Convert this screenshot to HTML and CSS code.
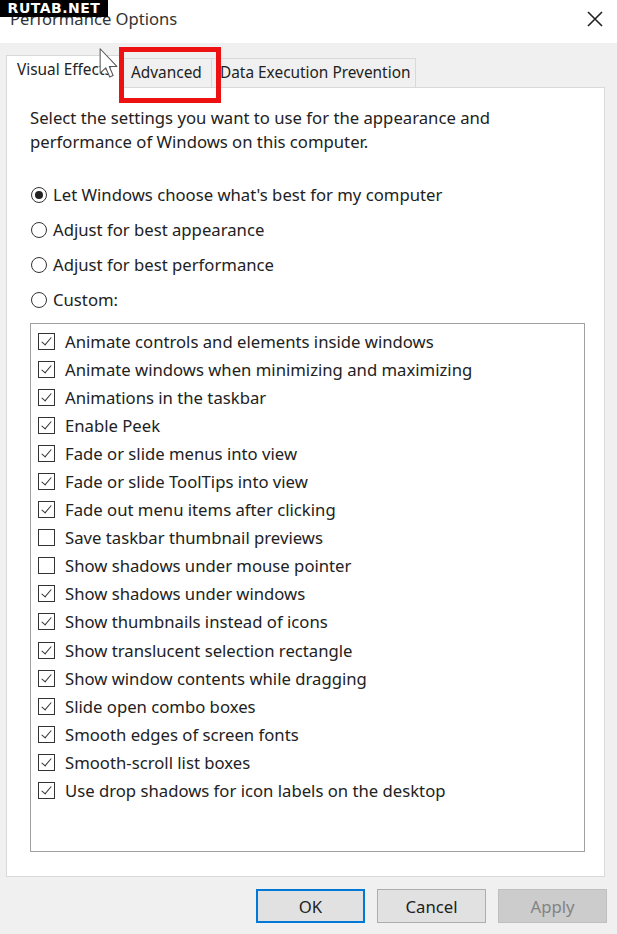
FILE: index.html
```html
<!DOCTYPE html>
<html lang="en">

<head>
    <meta charset="UTF-8">
    <meta name="viewport" content="width=device-width, initial-scale=1.0">
    <title>Performance Options</title>
    <link rel="stylesheet" href="styles.css">
</head>

<body>
    <div class="window">
        <div class="titlebar">
            <span class="title">Performance Options</span>
            <svg class="close" width="16" height="16" viewBox="0 0 16 16">
                <path d="M1 1 L15 15 M15 1 L1 15" stroke="#222" stroke-width="1.6" fill="none" />
            </svg>
        </div>

        <div class="tabs">
            <div class="tab selected">Visual Effects</div>
            <div class="tab">Advanced</div>
            <div class="tab">Data Execution Prevention</div>
        </div>

        <div class="panel">
            <p class="intro">Select the settings you want to use for the appearance and performance of Windows on this computer.</p>

            <div class="radios">
                <div class="radio-row"><span class="radio checked"></span>Let Windows choose what's best for my computer</div>
                <div class="radio-row"><span class="radio"></span>Adjust for best appearance</div>
                <div class="radio-row"><span class="radio"></span>Adjust for best performance</div>
                <div class="radio-row"><span class="radio"></span>Custom:</div>
            </div>

            <ul class="listbox">
                <li><span class="check on"></span>Animate controls and elements inside windows</li>
                <li><span class="check on"></span>Animate windows when minimizing and maximizing</li>
                <li><span class="check on"></span>Animations in the taskbar</li>
                <li><span class="check on"></span>Enable Peek</li>
                <li><span class="check on"></span>Fade or slide menus into view</li>
                <li><span class="check on"></span>Fade or slide ToolTips into view</li>
                <li><span class="check on"></span>Fade out menu items after clicking</li>
                <li><span class="check"></span>Save taskbar thumbnail previews</li>
                <li><span class="check"></span>Show shadows under mouse pointer</li>
                <li><span class="check on"></span>Show shadows under windows</li>
                <li><span class="check on"></span>Show thumbnails instead of icons</li>
                <li><span class="check on"></span>Show translucent selection rectangle</li>
                <li><span class="check on"></span>Show window contents while dragging</li>
                <li><span class="check on"></span>Slide open combo boxes</li>
                <li><span class="check on"></span>Smooth edges of screen fonts</li>
                <li><span class="check on"></span>Smooth-scroll list boxes</li>
                <li><span class="check on"></span>Use drop shadows for icon labels on the desktop</li>
            </ul>
        </div>

        <div class="buttons">
            <button class="default">OK</button>
            <button>Cancel</button>
            <button disabled>Apply</button>
        </div>
    </div>

    <!-- overlays from the video frame -->
    <div class="watermark">RUTAB.NET</div>
    <div class="highlight"></div>
    <svg class="cursor" width="20" height="31" viewBox="0 0 13 21">
        <path d="M0.5 0.5 L0.5 17 L4.3 13.4 L7 19.6 L9.3 18.6 L6.7 12.5 L11.8 12.5 Z" fill="#fff" stroke="#555" stroke-width="0.7" stroke-linejoin="round" />
    </svg>
</body>

</html>
```

FILE: styles.css
```css
body {
    margin: 0;
    padding: 0;
    background-color: #f0f0f0;
    font-family: "Noto Sans", "Open Sans", sans-serif;
    font-size: 16.7px;
    color: #222;
}

.window {
    display: flex;
    flex-direction: column;
    height: 934px;
}

.titlebar {
    height: 43px;
    background-color: #fff;
    display: flex;
    align-items: center;
    justify-content: space-between;
    padding: 0 14px 6px 10px;
    box-sizing: border-box;
}

.title {
    font-size: 16.6px;
    color: #333;
}

/* Tabs */
.tabs {
    display: flex;
    align-items: flex-end;
    margin: 12px 0 0 6px;
    position: relative;
    z-index: 1;
    font-size: 15.4px;
}

.tab {
    height: 29px;
    line-height: 27px;
    padding: 0 8px;
    box-sizing: border-box;
    border: 1px solid #d9d9d9;
    border-bottom: none;
    background-color: #f0f0f0;
    white-space: nowrap;
    overflow: hidden;
}

.tab.selected {
    height: 33px;
    width: 116px;
    padding-left: 10px;
    background-color: #fff;
    margin-bottom: -1px;
    border-right: none;
}

.tab:nth-child(2) {
    width: 90px;
}

.tab:nth-child(3) {
    width: 204px;
    border-left: none;
}

/* Panel */
.panel {
    margin: 0 12px 0 6px;
    background-color: #fff;
    border: 1px solid #d9d9d9;
    padding: 18px 19px 24px 23px;
}

.intro {
    margin: 0;
    line-height: 24px;
    width: 490px;
}

.radios {
    margin-top: 23px;
    margin-bottom: 6px;
}

.radio-row {
    display: flex;
    align-items: center;
    height: 35px;
}

.radio {
    width: 16px;
    height: 16px;
    border: 1px solid #333;
    border-radius: 50%;
    box-sizing: border-box;
    margin: 0 6px 0 1px;
    position: relative;
}

.radio.checked::after {
    content: "";
    position: absolute;
    left: 3px;
    top: 3px;
    width: 8px;
    height: 8px;
    border-radius: 50%;
    background-color: #222;
}

.listbox {
    list-style: none;
    margin: 0;
    padding: 3px 0 0 7px;
    height: 529px;
    box-sizing: border-box;
    border: 1px solid #a0a0a0;
}

.listbox li {
    display: flex;
    align-items: center;
    height: 28.1px;
}

.check {
    width: 17px;
    height: 17px;
    border: 1px solid #333;
    box-sizing: border-box;
    margin-right: 10px;
    position: relative;
}

.check.on::after {
    content: "";
    position: absolute;
    left: 5px;
    top: 1px;
    width: 4px;
    height: 9px;
    border: solid #333;
    border-width: 0 1.5px 1.5px 0;
    transform: rotate(40deg);
}

/* Buttons */
.buttons {
    display: flex;
    justify-content: flex-end;
    gap: 12px;
    padding: 12px 10px 0 0;
}

button {
    width: 109px;
    height: 34px;
    font-family: "Noto Sans", "Open Sans", sans-serif;
    font-size: 16.7px;
    color: #222;
    background-color: #e1e1e1;
    border: 1px solid #adadad;
    padding: 0;
}

button.default {
    border: 2px solid #0078d7;
}

button:disabled {
    background-color: #cccccc;
    border-color: #bfbfbf;
    color: #838383;
}

/* Overlays */
.watermark {
    position: absolute;
    left: 0;
    top: 0;
    width: 108px;
    height: 17px;
    background-color: #000;
    color: #fff;
    font-family: "DejaVu Sans", sans-serif;
    font-weight: bold;
    font-size: 14px;
    line-height: 17px;
    text-align: center;
    letter-spacing: 0.5px;
}

.highlight {
    position: absolute;
    left: 119px;
    top: 47px;
    width: 102px;
    height: 56px;
    box-sizing: border-box;
    border: 5px solid #ee1111;
    z-index: 2;
}

.cursor {
    position: absolute;
    left: 99px;
    top: 48px;
    z-index: 3;
}
```
